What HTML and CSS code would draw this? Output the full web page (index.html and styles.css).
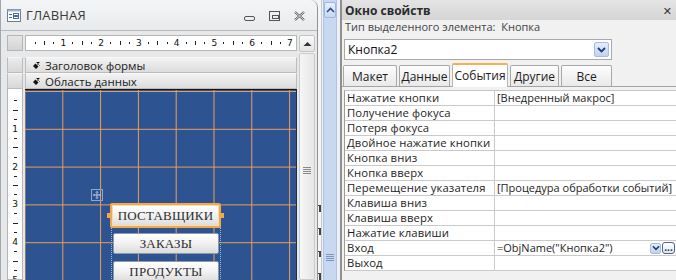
FILE: index.html
```html
<!DOCTYPE html>
<html lang="ru">
<head>
<meta charset="utf-8">
<title>Access</title>
<link rel="stylesheet" href="styles.css">
</head>
<body>
<div class="app">
  <section class="formwin">
    <header class="fw-title">
      <svg class="fw-icon" width="14" height="13" viewBox="0 0 14 13">
        <rect x="0.5" y="0.5" width="13" height="12" fill="#fff" stroke="#6b7f99"/>
        <rect x="0.5" y="0.5" width="13" height="2" fill="#9fb4cf"/>
        <line x1="2" y1="5.5" x2="5" y2="5.5" stroke="#4a6fa5"/>
        <line x1="2" y1="8.5" x2="5" y2="8.5" stroke="#4a6fa5"/>
        <rect x="6.5" y="4.5" width="5" height="2" fill="none" stroke="#4a6fa5"/>
        <rect x="6.5" y="7.5" width="5" height="2" fill="none" stroke="#4a6fa5"/>
      </svg>
      <span class="fw-name">ГЛАВНАЯ</span>
      <div class="fw-ctrls">
        <span class="wb wb-min"></span>
        <span class="wb wb-max"></span>
        <svg class="wb-close" width="11" height="10" viewBox="0 0 11 10">
          <path d="M1 1 L10 9 M10 1 L1 9" stroke="#555" stroke-width="2.2" fill="none"/>
          <path d="M1 1 L10 9 M10 1 L1 9" stroke="#fff" stroke-width="0.8" fill="none"/>
        </svg>
      </div>
    </header>
    <div class="fw-body">
      <div class="vcol">
        <div class="corner"></div>
        <div class="sbox"></div>
        <div class="sbox"></div>
        <div class="vruler">
          <i class="hd"></i><i class="hl"></i><i class="hd"></i><b>1</b>
          <i class="hd"></i><i class="hl"></i><i class="hd"></i><b>2</b>
          <i class="hd"></i><i class="hl"></i><i class="hd"></i><b>3</b>
          <i class="hd"></i><i class="hl"></i><i class="hd"></i><b>4</b>
          <i class="hd"></i><i class="hl"></i><i class="hd"></i><b>5</b>
        </div>
      </div>
      <div class="main">
        <div class="hruler">
          <i class="d"></i><i class="b"></i><i class="d"></i><b>1</b>
          <i class="d"></i><i class="b"></i><i class="d"></i><b>2</b>
          <i class="d"></i><i class="b"></i><i class="d"></i><b>3</b>
          <i class="d"></i><i class="b"></i><i class="d"></i><b>4</b>
          <i class="d"></i><i class="b"></i><i class="d"></i><b>5</b>
          <i class="d"></i><i class="b"></i><i class="d"></i><b>6</b>
          <i class="d"></i><i class="b"></i><i class="d"></i><b>7</b>
          <i class="d"></i>
        </div>
        <div class="section"><svg class="sec-ic" width="9" height="9" viewBox="0 0 9 9"><path d="M8 1 L8 4 L5 4 L6.5 5.5 L4 8 L1 5 L3.5 2.5 L5 4 Z M8 1 L4 1 L8 5 Z" fill="#111"/></svg>Заголовок формы</div>
        <div class="section"><svg class="sec-ic" width="9" height="9" viewBox="0 0 9 9"><path d="M8 1 L8 4 L5 4 L6.5 5.5 L4 8 L1 5 L3.5 2.5 L5 4 Z M8 1 L4 1 L8 5 Z" fill="#111"/></svg>Область данных</div>
        <div class="grid">
          <svg class="move" width="12" height="12" viewBox="0 0 12 12">
            <rect x="0.5" y="0.5" width="11" height="11" fill="none" stroke="#8ea6c8"/>
            <path d="M6 2.5 V9.5 M2.5 6 H9.5 M5 3.5 L6 2.5 L7 3.5 M5 8.5 L6 9.5 L7 8.5 M3.5 5 L2.5 6 L3.5 7 M8.5 5 L9.5 6 L8.5 7" stroke="#b8c8e0" fill="none"/>
          </svg>
          <div class="layout-guide"></div>
          <div class="ctl ctl-sel">ПОСТАВЩИКИ<span class="hnd hnd-l"></span><span class="hnd hnd-r"></span></div>
          <div class="ctl ctl-2">ЗАКАЗЫ</div>
          <div class="ctl ctl-3">ПРОДУКТЫ</div>
        </div>
      </div>
      <div class="vscroll">
        <div class="vs-btn"><svg width="9" height="6" viewBox="0 0 9 6"><path d="M0.5 5 L4.5 1 L8.5 5 Z" fill="#333"/></svg></div>
        <div class="vs-thumb"><span class="grip"></span></div>
      </div>
    </div>
  </section>

  <div class="between">
    <div class="bg-ruler"><i></i><i></i><i></i><i></i></div>
    <div class="bscroll">
      <div class="bs-btn"><svg width="9" height="6" viewBox="0 0 9 6"><path d="M1 5 L4.5 1.5 L8 5" stroke="#2a4a8a" stroke-width="1.6" fill="none"/></svg></div>
      <div class="bs-track"><span class="grip bgrip"></span></div>
    </div>
  </div>

  <section class="props">
    <header class="p-title"><span>Окно свойств</span><span class="p-close">✕</span></header>
    <div class="p-type">Тип выделенного элемента:&nbsp; Кнопка</div>
    <div class="p-combo">
      <span class="combo-val">Кнопка2</span>
      <span class="ddbtn"><svg width="9" height="6" viewBox="0 0 9 6"><path d="M1 1 L4.5 4.5 L8 1" stroke="#1d3f7a" stroke-width="1.8" fill="none"/></svg></span>
    </div>
    <nav class="tabs">
      <span class="tab t1">Макет</span>
      <span class="tab t2">Данные</span>
      <span class="tab t3 active">События</span>
      <span class="tab t4">Другие</span>
      <span class="tab t5">Все</span>
    </nav>
    <div class="ptable">
      <div class="row"><span class="lbl">Нажатие кнопки</span><span class="val">[Внедренный макрос]</span></div>
      <div class="row"><span class="lbl">Получение фокуса</span><span class="val"></span></div>
      <div class="row"><span class="lbl">Потеря фокуса</span><span class="val"></span></div>
      <div class="row"><span class="lbl">Двойное нажатие кнопки</span><span class="val"></span></div>
      <div class="row"><span class="lbl">Кнопка вниз</span><span class="val"></span></div>
      <div class="row"><span class="lbl">Кнопка вверх</span><span class="val"></span></div>
      <div class="row"><span class="lbl">Перемещение указателя</span><span class="val">[Процедура обработки событий]</span></div>
      <div class="row"><span class="lbl">Клавиша вниз</span><span class="val"></span></div>
      <div class="row"><span class="lbl">Клавиша вверх</span><span class="val"></span></div>
      <div class="row"><span class="lbl">Нажатие клавиши</span><span class="val"></span></div>
      <div class="row"><span class="lbl">Вход</span><span class="val val-edit"><span class="vtext">=ObjName("Кнопка2")</span><span class="mini-dd"><svg width="9" height="6" viewBox="0 0 9 6"><path d="M1 1 L4.5 4.5 L8 1" stroke="#1d3f7a" stroke-width="1.8" fill="none"/></svg></span><span class="builder">...</span></span></div>
      <div class="row"><span class="lbl">Выход</span><span class="val"></span></div>
    </div>
  </section>
</div>
</body>
</html>
```

FILE: styles.css
```css
* { box-sizing: border-box; margin: 0; padding: 0; }

body {
  width: 676px;
  height: 280px;
  overflow: hidden;
  background: #f0f0f0;
  font-family: "Open Sans", "Noto Sans", "DejaVu Sans", sans-serif;
  color: #1e1e1e;
}

.app { display: flex; height: 280px; }

/* ---------- form design window ---------- */
.formwin {
  width: 318px;
  flex: none;
  display: flex;
  flex-direction: column;
  background: #e7e8ea;
  border-left: 1px solid #a3a7ad;
  border-right: 1px solid #8d9299;
  border-top-right-radius: 8px;
  overflow: hidden;
}

.fw-title {
  height: 31px;
  flex: none;
  display: flex;
  align-items: center;
  padding-left: 6px;
  background: linear-gradient(#f4f5f6, #e9eaec);
  border-bottom: 1px solid #b7bbc0;
}
.fw-icon { flex: none; margin-top: 1px; }
.fw-name {
  margin-left: 5px;
  font-size: 13px;
  color: #3a3a3a;
  letter-spacing: 0.2px;
}
.fw-ctrls {
  margin-left: auto;
  display: flex;
  align-items: center;
  gap: 14px;
  padding-right: 12px;
  padding-top: 1px;
}
.wb { display: block; border: 1px solid #555; }
.wb-min { width: 11px; height: 5px; border-radius: 2px; margin-top: 5px; }
.wb-max { width: 11px; height: 10px; position: relative; }
.wb-max::after {
  content: "";
  position: absolute;
  left: 2px; top: 3px;
  width: 5px; height: 2px;
  border: 1px solid #555;
}

.fw-body {
  flex: 1;
  display: flex;
  gap: 2px;
  padding: 4px 4px 0 6px;
  min-height: 0;
}

.vcol {
  width: 16px;
  flex: none;
  display: flex;
  flex-direction: column;
}
.corner {
  height: 16px;
  background: linear-gradient(#e6e6e6, #d4d4d4);
  border: 1px solid #b5b5b5;
  margin-bottom: 6px;
}
.sbox {
  height: 16px;
  background: linear-gradient(#ececec, #d7d7d7);
  border: 1px solid #bcbcbc;
  border-top-color: #f6f6f6;
}
.vruler {
  flex: 1;
  background: #fff;
  border: 1px solid #b5b5b5;
  border-top: none;
  padding-top: 6.9px;
  display: flex;
  flex-direction: column;
  overflow: hidden;
}
.vruler > * {
  height: 9.45px;
  flex: none;
  display: flex;
  align-items: center;
  justify-content: center;
}
.vruler i::before { content: ""; display: block; height: 1px; background: #222; }
.vruler i.hd::before { width: 3px; }
.vruler i.hl::before { width: 5px; }
.vruler b { font-weight: normal; font-size: 9px; color: #111; font-family: "DejaVu Sans", sans-serif; }

.main {
  width: 272px;
  flex: none;
  display: flex;
  flex-direction: column;
}
.hruler {
  height: 16px;
  flex: none;
  background: #fff;
  border: 1px solid #b5b5b5;
  margin-bottom: 6px;
  padding-left: 4.4px;
  display: flex;
  overflow: hidden;
}
.hruler > * {
  width: 9.45px;
  flex: none;
  display: flex;
  align-items: center;
  justify-content: center;
}
.hruler i::before { content: ""; display: block; width: 1px; background: #222; }
.hruler i.d::before { height: 2px; }
.hruler i.b::before { height: 4px; }
.hruler b { font-weight: normal; font-size: 9px; color: #111; font-family: "DejaVu Sans", sans-serif; }

.section {
  height: 16px;
  flex: none;
  display: flex;
  align-items: center;
  padding-left: 6px;
  gap: 4px;
  font-size: 11.5px;
  color: #1b1b1b;
  background: linear-gradient(#f3f3f3, #dcdcdc);
  border: 1px solid #bcbcbc;
  border-top-color: #f8f8f8;
}
.sec-ic { flex: none; }

.grid {
  flex: 1;
  position: relative;
  border-top: 1px solid #101820;
  border-right: 1px solid #1e2f48;
  background-color: #2d5491;
  background-image:
    linear-gradient(to right, #e99d5d 1px, transparent 1px),
    linear-gradient(to bottom, #e99d5d 1px, transparent 1px);
  background-size: 37.8px 37.8px;
  background-position: -0.5px 1px;
}

.move { position: absolute; left: 66px; top: 99px; }

.layout-guide {
  position: absolute;
  left: 86px; top: 137px;
  width: 110px; height: 60px;
  border-left: 1px dotted #9db5dc;
  border-right: 1px dotted #9db5dc;
}

.ctl {
  position: absolute;
  display: flex;
  align-items: center;
  justify-content: center;
  font-family: "Liberation Serif", "Times New Roman", serif;
  font-size: 13px;
  color: #2f2f2f;
  letter-spacing: 0.2px;
  background: linear-gradient(#ffffff, #f3f3f3 45%, #dcdcdc);
  border: 1px solid #8e9aa8;
  border-radius: 2px;
}
.ctl-sel {
  left: 85px; top: 113px;
  width: 111px; height: 25px;
  border: 2px solid #f2a84d;
  box-shadow: inset 0 0 0 1px #fbd9a8;
}
.ctl-2 { left: 88px; top: 143px; width: 106px; height: 21px; }
.ctl-3 { left: 88px; top: 171px; width: 106px; height: 22px; }
.hnd {
  position: absolute;
  top: 8px;
  width: 4px; height: 5px;
  background: #f2a84d;
}
.hnd-l { left: -5px; }
.hnd-r { right: -5px; }

.vscroll {
  width: 16px;
  flex: none;
  display: flex;
  flex-direction: column;
  background: #efefef;
}
.vs-btn {
  height: 17px;
  flex: none;
  display: flex;
  align-items: center;
  justify-content: center;
  background: linear-gradient(#fafafa, #e4e4e4);
  border: 1px solid #c4c4c4;
  border-radius: 2px;
}
.vs-thumb {
  flex: 1;
  margin-top: 1px;
  display: flex;
  justify-content: center;
  padding-top: 113px;
  background: linear-gradient(to right, #f6f6f6, #e6e6e6);
  border: 1px solid #cbcbcb;
  border-radius: 2px;
}
.grip {
  display: block;
  width: 8px; height: 7px;
  background: repeating-linear-gradient(#8a8a8a 0 1px, transparent 1px 2px);
}

/* ---------- strip between windows ---------- */
.between {
  width: 22px;
  flex: none;
  display: flex;
  background: #eef0f3;
}
.bg-ruler {
  width: 4px;
  flex: none;
  background: #f6f6f6;
  border-right: 1px solid #c8c8c8;
  display: flex;
  flex-direction: column;
  padding-top: 205px;
  gap: 16px;
  overflow: hidden;
}
.bg-ruler i { display: block; width: 3px; height: 7px; border-right: 2px solid #444; border-top: 1px solid #444; }
.bscroll {
  width: 14px;
  flex: none;
  margin-left: 1px;
  display: flex;
  flex-direction: column;
  background: #c9d8f1;
  border-left: 1px solid #aec2e4;
  border-right: 1px solid #aec2e4;
}
.bs-btn {
  height: 16px;
  margin-top: 2px;
  flex: none;
  display: flex;
  align-items: center;
  justify-content: center;
  background: linear-gradient(#e6eefb, #c8d8f2);
  border: 1px solid #9fb6de;
  border-radius: 2px;
}
.bs-track { flex: 1; display: flex; justify-content: center; padding-top: 236px; }
.bgrip { background: repeating-linear-gradient(#7d94bf 0 1px, transparent 1px 2px); }

/* ---------- property sheet ---------- */
.props {
  flex: 1;
  display: flex;
  flex-direction: column;
  background: #f1f1f1;
  border-left: 2px solid #8f8f8f;
}
.p-title {
  height: 20px;
  flex: none;
  display: flex;
  align-items: center;
  padding-left: 3px;
  padding-right: 4px;
  font-size: 12px;
  font-weight: bold;
  color: #2b2b2b;
  background: linear-gradient(#e4e4e4, #d5d5d5);
}
.p-close { margin-left: auto; font-size: 11px; font-weight: bold; color: #333; }
.p-type {
  height: 19px;
  flex: none;
  padding-left: 3px;
  font-size: 11px;
  line-height: 14px;
  color: #454545;
}
.p-combo {
  margin-left: 2px;
  width: 268px;
  height: 21px;
  flex: none;
  display: flex;
  align-items: center;
  background: #fff;
  border: 1px solid #a9a9a9;
  padding-left: 3px;
  padding-right: 2px;
  font-size: 12px;
  color: #111;
}
.ddbtn, .mini-dd {
  margin-left: auto;
  display: flex;
  align-items: center;
  justify-content: center;
  background: linear-gradient(#e3ecf9, #bfd3f0);
  border: 1px solid #a6bde2;
  border-radius: 2px;
}
.ddbtn { width: 15px; height: 15px; }

.tabs {
  height: 27px;
  flex: none;
  display: flex;
  align-items: flex-end;
  gap: 2px;
  padding-left: 1px;
  border-bottom: 1px solid #a4a4a4;
}
.tab {
  height: 21px;
  display: flex;
  align-items: center;
  justify-content: center;
  font-size: 12px;
  color: #1c1c1c;
  background: linear-gradient(#fdfdfd, #e9e9e9);
  border: 1px solid #a8a8a8;
  border-bottom: none;
  border-radius: 2px 2px 0 0;
}
.t1 { width: 54px; }
.t2 { width: 51px; }
.t3 { width: 56px; }
.t4 { width: 49px; }
.t5 { width: 51px; }
.tab.active {
  height: 24px;
  background: #fff;
  border-top: 2px solid #f2b04f;
  padding-bottom: 2px;
  margin-bottom: -1px;
  border-color: #b4b4b4;
  border-top-color: #f2b04f;
}

.ptable {
  margin-top: 3px;
  margin-left: 2px;
  border-top: 1px solid #c6c6c6;
  border-left: 1px solid #9c9c9c;
}
.row {
  display: grid;
  grid-template-columns: 150px 1fr;
  height: 15px;
  border-bottom: 1px solid #cacaca;
  background: #fff;
  font-size: 11px;
  line-height: 14px;
  color: #1e1e1e;
}
.lbl { padding-left: 2px; border-right: 1px solid #cacaca; white-space: nowrap; overflow: hidden; font-size: 11.3px; letter-spacing: 0.1px; }
.val { padding-left: 2px; white-space: nowrap; overflow: hidden; }
.val-edit { display: flex; align-items: center; padding-right: 1px; }
.mini-dd { width: 11px; height: 11px; margin-right: 1px; }
.mini-dd svg { width: 8px; }
.builder {
  width: 13px; height: 12px;
  display: flex;
  align-items: center;
  justify-content: center;
  font-size: 10px;
  line-height: 8px;
  font-weight: bold;
  color: #1d2f52;
  background: linear-gradient(#ffffff, #dfe7f3);
  border: 1px solid #4f6689;
  border-radius: 3px;
  padding-bottom: 3px;
}
```
